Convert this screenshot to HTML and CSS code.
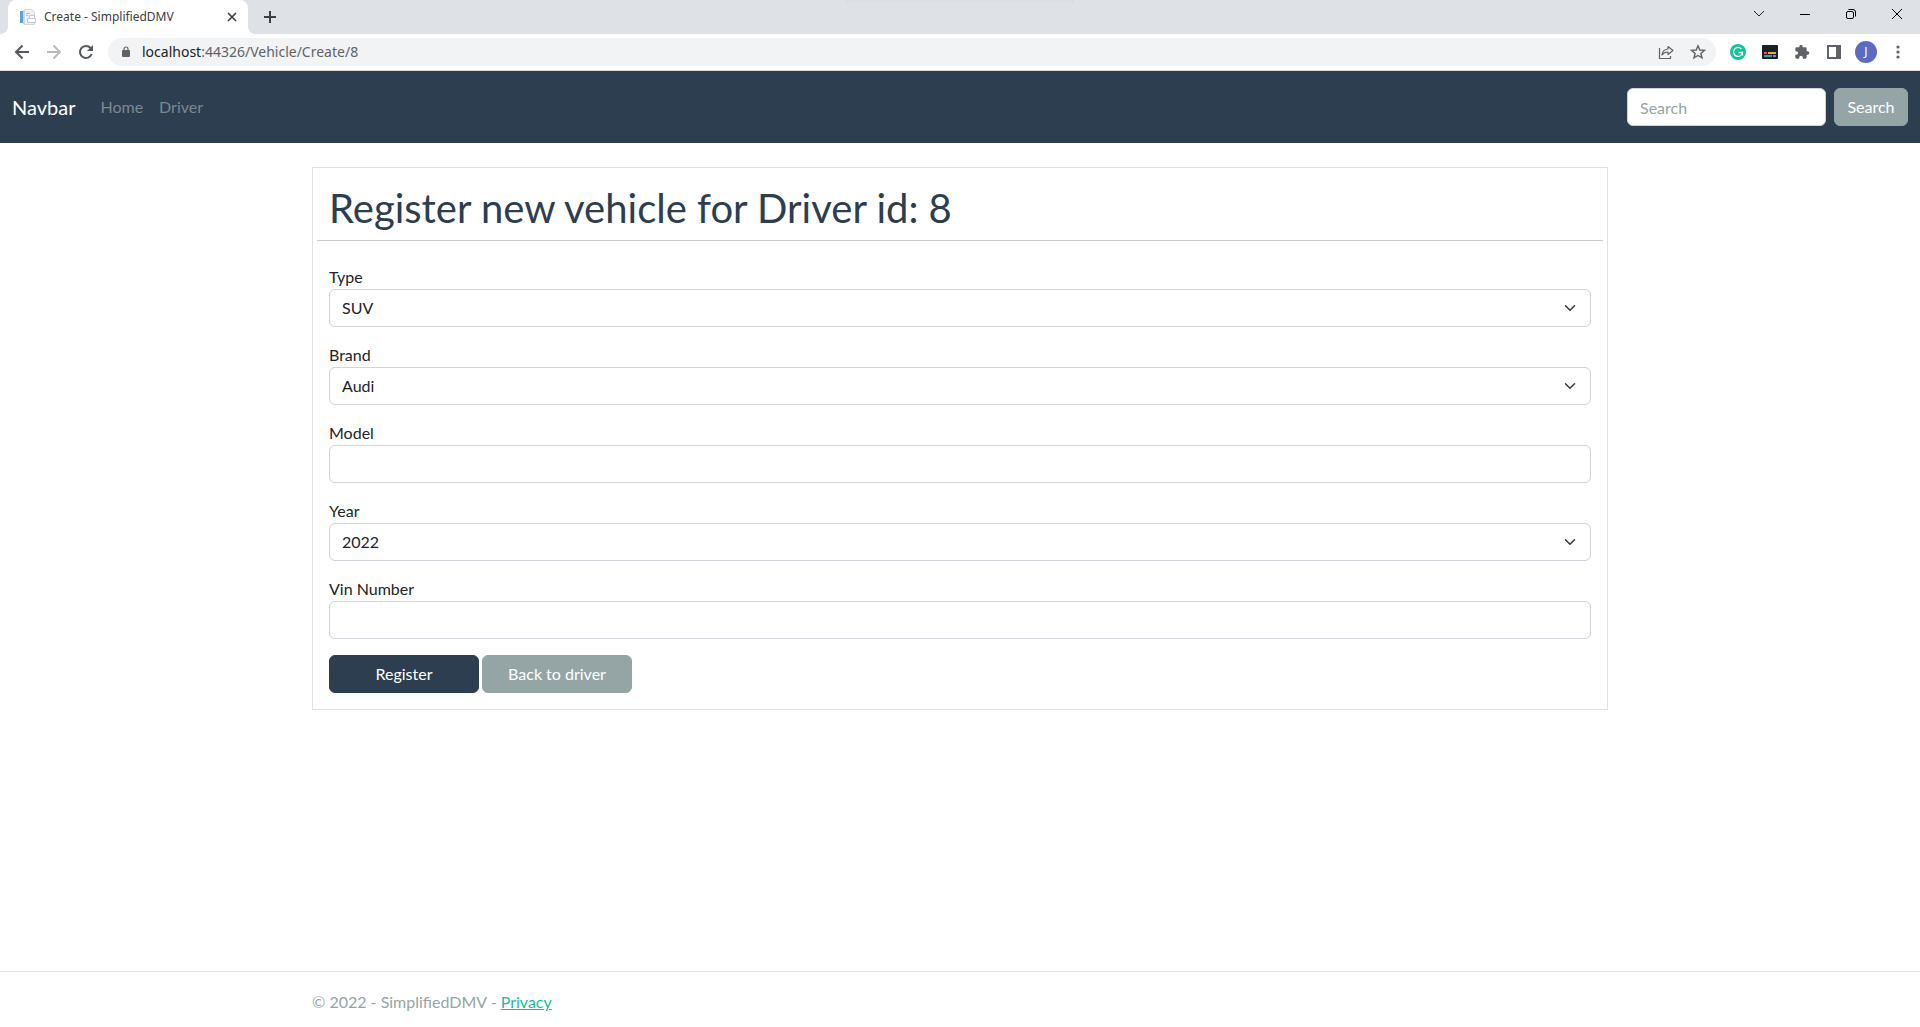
FILE: index.html
```html
<!DOCTYPE html>
<html lang="en">
<head>
<meta charset="utf-8">
<title>Create - SimplifiedDMV</title>
<meta name="viewport" content="width=device-width, initial-scale=1">
<link rel="stylesheet" href="styles.css">
</head>
<body>
<div class="browser">
  <div class="tab-strip">
    <div class="tab">
      <svg class="favicon" width="16" height="16" viewBox="0 0 16 16"><path fill="#eef1f4" stroke="#cfd6dc" d="M4.500 .5h7l3 3v12h-10z"/><path fill="#5da5d6" d="M0 2h3v12H0z"/><path fill="#b9d8ee" d="M3 1h1v14H3z"/><path stroke="#b5bfc9" d="M6 4.500h4M6 6.500h2"/><path fill="#fff" stroke="#c0c6d0" d="M7.500 9.500h8v4h-8zM9.500 6.500h5v3h-5z"/></svg>
      <span class="tab-title">Create - SimplifiedDMV</span>
      <button class="chrome-btn tab-close" aria-label="Close tab"><svg width="16" height="16" viewBox="0 0 16 16"><path d="M4 4l8 8M12 4l-8 8" stroke="#3c4043" stroke-width="1.700"/></svg></button>
    </div>
    <button class="chrome-btn new-tab" aria-label="New tab"><svg width="16" height="16" viewBox="0 0 16 16"><path d="M8 2v12M2 8h12" stroke="#3c4043" stroke-width="2"/></svg></button>
    <div class="window-shade"></div>
    <div class="window-buttons">
      <button class="chrome-btn" aria-label="Search tabs"><svg width="12" height="12" viewBox="0 0 12 12"><path d="M1 3l5 5 5-5" fill="none" stroke="#222"/></svg></button>
      <button class="chrome-btn" aria-label="Minimize"><svg width="12" height="12" viewBox="0 0 12 12"><path d="M1 6.500h10" stroke="#000"/></svg></button>
      <button class="chrome-btn" aria-label="Restore"><svg width="12" height="12" viewBox="0 0 12 12" fill="none" stroke="#000"><rect x="1.500" y="3.500" width="7" height="7" rx="1.500"/><path d="M3.500 1.500H8a2.500 2.500 0 0 1 2.500 2.500v4.500"/></svg></button>
      <button class="chrome-btn" aria-label="Close"><svg width="12" height="12" viewBox="0 0 12 12"><path d="M1 1l10 10M11 1L1 11" stroke="#000"/></svg></button>
    </div>
  </div>
  <div class="toolbar">
    <button class="chrome-btn" aria-label="Back"><svg width="16" height="16" viewBox="0 0 16 16" fill="none" stroke="#55585c" stroke-width="2"><path d="M15 8H2M8.500 1.500L2 8l6.500 6.500"/></svg></button>
    <button class="chrome-btn" aria-label="Forward"><svg width="16" height="16" viewBox="0 0 16 16" fill="none" stroke="#babcbe" stroke-width="2"><path d="M1 8h13M7.500 1.500L14 8l-6.500 6.500"/></svg></button>
    <button class="chrome-btn" aria-label="Reload"><svg width="16" height="16" viewBox="0 0 16 16"><path d="M13.600 10A6 6 0 1 1 12.500 4" fill="none" stroke="#55585c" stroke-width="2"/><path d="M15 1v6H9z" fill="#55585c"/></svg></button>
    <div class="address-bar">
      <svg width="12" height="14" viewBox="0 0 12 14"><path fill="#5f6368" d="M3 5h6a1 1 0 0 1 1 1v5a1 1 0 0 1-1 1H3a1 1 0 0 1-1-1V6a1 1 0 0 1 1-1z"/><path d="M4 6V4a2 2 0 0 1 4 0v2" fill="none" stroke="#5f6368" stroke-width="1.200"/></svg>
      <span class="url"><span class="url-host">localhost</span>:44326/Vehicle/Create/8</span>
      <button class="chrome-btn" aria-label="Share"><svg width="16" height="16" viewBox="0 0 16 16" fill="none" stroke="#5f6368" stroke-width="1.200"><path d="M1.500 4v10.500h11V12"/><path stroke-linejoin="round" d="M10 2.500l5 4-5 4V8C7 8 5.500 9 4 11c.3-3.500 2.500-5.600 6-6z"/></svg></button>
      <button class="chrome-btn" aria-label="Bookmark"><svg width="16" height="16" viewBox="0 0 16 16"><path d="M8 1.800l1.800 4.200 4.700.4-3.600 3 1.100 4.500L8 11.500l-4 2.400 1.100-4.500-3.600-3 4.700-.4z" fill="none" stroke="#5f6368" stroke-width="1.400"/></svg></button>
    </div>
    <button class="chrome-btn" aria-label="Writing assistant"><svg width="16" height="16" viewBox="0 0 16 16"><circle cx="8" cy="8" r="8" fill="#15c39a"/><path d="M11.400 4.900A4.500 4.500 0 1 0 12.500 8.500M8.500 8.500h4v3" fill="none" stroke="#fff" stroke-width="1.300"/></svg></button>
    <button class="chrome-btn" aria-label="Subtitles"><svg width="16" height="14" viewBox="0 0 16 14"><rect width="16" height="14" rx="1" fill="#14232b"/><path stroke="#f05050" stroke-width="2" d="M2 8h3"/><path stroke="#f0a830" stroke-width="2" d="M6 8h8"/><path stroke="#4d9aa0" stroke-width="2" d="M2 11h8"/><path stroke="#b06ac0" stroke-width="2" d="M11 11h3"/></svg></button>
    <button class="chrome-btn" aria-label="Extensions"><svg width="16" height="16" viewBox="0 0 24 24"><path fill="#5f6368" d="M20.500 11H19V7a2 2 0 0 0-2-2h-4V3.500a2.500 2.500 0 0 0-5 0V5H4a2 2 0 0 0-2 2v3.800h1.500a2.700 2.700 0 0 1 0 5.400H2V20c0 1.100.9 2 2 2h3.800v-1.500a2.700 2.700 0 0 1 5.400 0V22H17a2 2 0 0 0 2-2v-4h1.500a2.500 2.500 0 0 0 0-5z"/></svg></button>
    <button class="chrome-btn" aria-label="Side panel"><svg width="14" height="14" viewBox="0 0 14 14"><path fill="#5f6368" d="M0 0h14v14H0z"/><path fill="#fff" d="M2 2h7v10H2z"/></svg></button>
    <button class="chrome-btn" aria-label="Profile"><span class="avatar">J</span></button>
    <button class="chrome-btn" aria-label="Menu"><svg width="4" height="14" viewBox="0 0 4 14" fill="#5f6368"><circle cx="2" cy="2" r="1.600"/><circle cx="2" cy="7" r="1.600"/><circle cx="2" cy="12" r="1.600"/></svg></button>
  </div>
</div>

<header class="navbar">
  <a class="brand" href="#">Navbar</a>
  <nav class="nav-links">
    <a href="#">Home</a>
    <a href="#">Driver</a>
  </nav>
  <form class="search-form">
    <input class="control search-input" type="text" placeholder="Search" aria-label="Search">
    <button class="btn btn-secondary" type="button">Search</button>
  </form>
</header>

<main class="container">
  <form class="card">
    <h1>Register new vehicle for Driver id: 8</h1>
    <div class="fields">
      <div class="field">
        <label for="type">Type</label>
        <div class="select-wrap">
          <select class="control" id="type"><option>SUV</option></select>
          <svg class="chevron" width="16" height="12" viewBox="0 0 16 16"><path fill="none" stroke="#343a40" stroke-linecap="round" stroke-linejoin="round" stroke-width="2" d="M2 5l6 6 6-6"/></svg>
        </div>
      </div>
      <div class="field">
        <label for="brand">Brand</label>
        <div class="select-wrap">
          <select class="control" id="brand"><option>Audi</option></select>
          <svg class="chevron" width="16" height="12" viewBox="0 0 16 16"><path fill="none" stroke="#343a40" stroke-linecap="round" stroke-linejoin="round" stroke-width="2" d="M2 5l6 6 6-6"/></svg>
        </div>
      </div>
      <div class="field">
        <label for="model">Model</label>
        <input class="control" id="model" type="text">
      </div>
      <div class="field">
        <label for="year">Year</label>
        <div class="select-wrap">
          <select class="control" id="year"><option>2022</option></select>
          <svg class="chevron" width="16" height="12" viewBox="0 0 16 16"><path fill="none" stroke="#343a40" stroke-linecap="round" stroke-linejoin="round" stroke-width="2" d="M2 5l6 6 6-6"/></svg>
        </div>
      </div>
      <div class="field">
        <label for="vin">Vin Number</label>
        <input class="control" id="vin" type="text">
      </div>
      <div class="actions">
        <button class="btn btn-primary" type="submit">Register</button>
        <a class="btn btn-secondary" href="#">Back to driver</a>
      </div>
    </div>
  </form>
</main>

<footer class="footer">
  <div class="container">© 2022 - SimplifiedDMV - <a href="#">Privacy</a></div>
</footer>
</body>
</html>
```

FILE: styles.css
```css
*, *::before, *::after { box-sizing: border-box; }

body {
  margin: 0;
  min-height: 100vh;
  display: flex;
  flex-direction: column;
  font: 16px/24px Lato, sans-serif;
  color: #212529;
  background: #fff;
}

/* Browser window */
.browser {
  font-family: "Noto Sans", "Open Sans", sans-serif;
  border-bottom: 1px solid #dadce0;
}

.chrome-btn {
  display: flex;
  align-items: center;
  justify-content: center;
  flex: none;
  width: 32px;
  height: 28px;
  padding: 0;
  border: 0;
  background: none;
  font: inherit;
}

.tab-strip {
  position: relative;
  display: flex;
  height: 34px;
  padding-left: 8px;
  background: #dee1e6;
}

.tab {
  position: relative;
  display: flex;
  align-items: center;
  width: 240px;
  padding: 0 8px 0 12px;
  background: #fff;
  border-radius: 8px 8px 0 0;
}

.tab::before,
.tab::after {
  content: "";
  position: absolute;
  bottom: 0;
  width: 8px;
  height: 8px;
}

.tab::before {
  right: 100%;
  background: radial-gradient(circle at 0 0, transparent 8px, #fff 8px);
}

.tab::after {
  left: 100%;
  background: radial-gradient(circle at 100% 0, transparent 8px, #fff 8px);
}

.tab-title {
  flex: 1;
  margin-left: 8px;
  font-size: 12px;
  color: #3c4043;
  white-space: nowrap;
}

.tab-close { width: 16px; }

.new-tab {
  height: 34px;
  margin-left: 6px;
}

/* Soft shadow that falls over the top edge of the window */
.window-shade {
  position: absolute;
  top: 0;
  left: 50%;
  width: 228px;
  height: 4px;
  transform: translateX(-50%);
  background: linear-gradient(#d8dbe0, #dee1e6);
}

.window-buttons {
  display: flex;
  margin-left: auto;
}

.window-buttons .chrome-btn { width: 46px; }

.toolbar {
  display: flex;
  align-items: center;
  height: 36px;
  padding: 0 6px;
}

.address-bar {
  display: flex;
  align-items: center;
  flex: 1;
  height: 28px;
  margin: 0 6px;
  padding: 0 2px 0 12px;
  border-radius: 14px;
  background: #f1f3f4;
}

.url {
  flex: 1;
  margin-left: 10px;
  font-size: 14px;
  color: #5f6368;
}

.url-host { color: #202124; }

.avatar {
  width: 22px;
  border-radius: 50%;
  background: #5c6bc0;
  color: #fff;
  font-size: 12px;
  line-height: 22px;
}

/* Site navigation */
.navbar {
  display: flex;
  align-items: center;
  padding: 16px 12px;
  background: #2c3e50;
}

.navbar a { text-decoration: none; }

.brand {
  margin-right: 17px;
  font-size: 20px;
  color: #fff;
}

.nav-links { display: flex; }

.nav-links a {
  padding: 8px;
  color: #7b8a8b;
}

.search-form {
  display: flex;
  gap: 8px;
  margin-left: auto;
}

.search-input { width: 199px; }

/* Controls */
.control {
  display: block;
  height: 38px;
  padding: 0 12px;
  border: 1px solid #ced4da;
  border-radius: 6px;
  background: #fff;
  color: #212529;
  font: inherit;
  appearance: none;
}

.control::placeholder { color: #95a5a6; opacity: 1; }

.btn {
  display: inline-block;
  min-width: 74px;
  padding: 6px 12px;
  border: 1px solid;
  border-radius: 6px;
  color: #fff;
  font: inherit;
  text-align: center;
  text-decoration: none;
}

.btn-primary { background: #2c3e50; border-color: #2c3e50; }
.btn-secondary { background: #95a5a6; border-color: #95a5a6; }

/* Vehicle form */
.container {
  width: 100%;
  max-width: 1320px;
  margin: 0 auto;
  padding: 0 12px;
}

.card {
  margin: 24px 0;
  padding: 16px 4px;
  border: 1px solid #dee2e6;
}

h1 {
  margin: 0;
  padding: 0 12px 8px;
  border-bottom: 1px solid #c8c9ca;
  color: #2c3e50;
  font-size: 40px;
  font-weight: 400;
  line-height: 48px;
}

.fields {
  display: flex;
  flex-direction: column;
  gap: 16px;
  padding: 24px 12px 0;
}

.field label { display: block; }
.field .control { width: 100%; }

.select-wrap {
  display: grid;
  align-items: center;
}

.select-wrap > * { grid-area: 1 / 1; }

.chevron {
  justify-self: end;
  margin-right: 13px;
  pointer-events: none;
}

.actions {
  display: flex;
  gap: 3px;
}

.actions .btn { width: 150px; }

.footer {
  margin-top: auto;
  padding: 18px 0 13px;
  border-top: 1px solid #dee2e6;
  color: #95a5a6;
}

.footer a { color: #18bc9c; }
```
